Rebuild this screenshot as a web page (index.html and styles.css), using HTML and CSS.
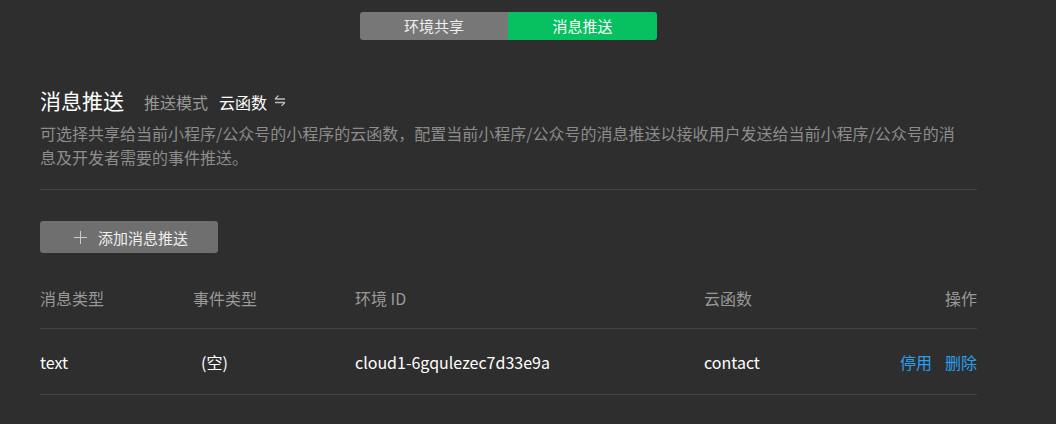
FILE: index.html
```html
<!DOCTYPE html>
<html lang="zh">
<head>
<meta charset="utf-8">
<link rel="stylesheet" href="styles.css">
</head>
<body>
<div class="page">
  <div class="tabs">
    <div class="tab">环境共享</div>
    <div class="tab active">消息推送</div>
  </div>
  <div class="head">
    <span class="title">消息推送</span>
    <span class="mode-label">推送模式</span>
    <span class="mode-value">云函数</span>
    <svg class="swap" width="12" height="12" viewBox="0 0 12 12"><path d="M1 5H11M1 5L4.5 1.5M1 8.5H11M11 8.5L7.5 12" stroke="#bbb" stroke-width="1.3" fill="none"/></svg>
  </div>
  <p class="desc">可选择共享给当前小程序/公众号的小程序的云函数，配置当前小程序/公众号的消息推送以接收用户发送给当前小程序/公众号的消息及开发者需要的事件推送。</p>
  <div class="divider"></div>
  <button class="add"><span class="plus"></span>添加消息推送</button>
  <div class="table">
    <div class="row header">
      <div>消息类型</div><div>事件类型</div><div>环境 ID</div><div>云函数</div><div class="right">操作</div>
    </div>
    <div class="row">
      <div>text</div><div class="empty">(空)</div><div>cloud1-6gqulezec7d33e9a</div><div>contact</div><div class="right ops"><a>停用</a><a>删除</a></div>
    </div>
  </div>
</div>
</body>
</html>
```
FILE: styles.css
```css
html, body { margin: 0; padding: 0; background: #2e2e2e; }
body { font-family: "Noto Sans CJK SC", "Noto Sans", sans-serif; color: #fff; font-size: 16px; }
.page { width: 937px; margin-left: 40px; padding-top: 12px; }
.tabs { display: flex; justify-content: center; }
.tab { width: 148px; height: 28px; line-height: 28px; text-align: center; background: #777; color: #eee; font-size: 15px; border-radius: 3px 0 0 3px; }
.tab.active { background: #07c160; color: #fff; border-radius: 0 3px 3px 0; width: 149px; }
.head { display: flex; align-items: baseline; margin-top: 45px; height: 30px; }
.title { font-size: 21px; color: #fff; margin-right: 20px; }
.mode-label { font-size: 16px; color: #999; margin-right: 11px; }
.mode-value { font-size: 16px; color: #fff; margin-right: 7px; }
.swap { align-self: center; }
.desc { margin: 6px 0 0; font-size: 16px; line-height: 24px; color: #8c8c8c; max-width: 930px; }
.divider { height: 1px; background: #444; margin-top: 20px; }
.add { margin-top: 31px; display: flex; align-items: center; width: 178px; height: 32px; padding: 0 0 0 34px; border: none; border-radius: 3px; background: #6f6f6f; color: #eee; font-family: inherit; font-size: 15px; }
.plus { position: relative; width: 13px; height: 13px; margin-right: 11px; }
.plus::before, .plus::after { content: ""; position: absolute; background: #ccc; }
.plus::before { left: 6px; top: 0; width: 1.3px; height: 13px; }
.plus::after { top: 6px; left: 0; height: 1.3px; width: 13px; }
.table { margin-top: 17px; }
.row { display: grid; grid-template-columns: 153px 162px 349px 1fr auto; align-items: center; height: 65px; border-bottom: 1px solid #444; }
.row.header { height: 56px; padding-bottom: 2px; color: #999; }
.empty { padding-left: 8px; }
.right { text-align: right; }
.ops { display: flex; gap: 13px; }
.ops a { color: #2b9ff0; cursor: pointer; }
```
